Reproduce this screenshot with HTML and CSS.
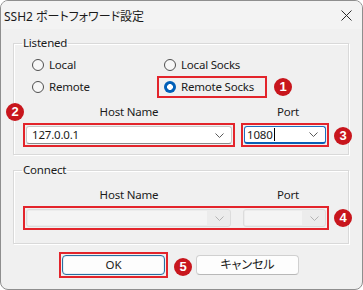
FILE: index.html
```html
<!DOCTYPE html>
<html lang="ja">
<head>
<meta charset="utf-8">
<title>SSH2 ポートフォワード設定</title>
<link rel="stylesheet" href="styles.css">
</head>
<body>
<div class="window">
  <div class="titlebar">
    <span class="title">SSH2 ポートフォワード設定</span>
    <svg class="close" width="11" height="11" viewBox="0 0 11 11"><path d="M0.5 0.5 L10.5 10.5 M10.5 0.5 L0.5 10.5" stroke="#2b2b2b" stroke-width="1" fill="none"/></svg>
  </div>

  <fieldset class="group listened">
    <legend>Listened</legend>
    <div class="radios">
      <label class="radio"><span class="dot"></span>Local</label>
      <label class="radio alt"><span class="dot"></span>Local Socks</label>
      <label class="radio"><span class="dot"></span>Remote</label>
      <label class="radio alt mark"><span class="dot on"></span>Remote Socks</label>
    </div>
    <div class="fields">
      <div class="lbl">Host Name</div>
      <div class="lbl port-lbl">Port</div>
      <div class="mark box">
        <div class="combo host"><span class="val">127.0.0.1</span><svg class="chev" width="9" height="5" viewBox="0 0 9 5"><polyline points="0.5,0.5 4.5,4.5 8.5,0.5" fill="none" stroke="#5a5a5a" stroke-width="1"/></svg></div>
      </div>
      <div class="mark box">
        <div class="combo port focus"><span class="val short">1080<span class="caret"></span></span><svg class="chev" width="9" height="5" viewBox="0 0 9 5"><polyline points="0.5,0.5 4.5,4.5 8.5,0.5" fill="none" stroke="#5a5a5a" stroke-width="1"/></svg></div>
      </div>
    </div>
  </fieldset>

  <fieldset class="group connect">
    <legend>Connect</legend>
    <div class="fields">
      <div class="lbl">Host Name</div>
      <div class="lbl port-lbl">Port</div>
      <div class="mark box pair">
        <div class="combo host disabled"><span class="edit"></span><svg class="chev" width="9" height="5" viewBox="0 0 9 5"><polyline points="0.5,0.5 4.5,4.5 8.5,0.5" fill="none" stroke="#b4b4b4" stroke-width="1"/></svg></div>
        <div class="combo port disabled"><span class="edit"></span><svg class="chev" width="9" height="5" viewBox="0 0 9 5"><polyline points="0.5,0.5 4.5,4.5 8.5,0.5" fill="none" stroke="#b4b4b4" stroke-width="1"/></svg></div>
      </div>
    </div>
  </fieldset>

  <div class="buttons">
    <div class="mark btnwrap"><button class="btn default">OK</button></div>
    <button class="btn cancel">キャンセル</button>
  </div>

  <span class="badge b1">1</span>
  <span class="badge b2">2</span>
  <span class="badge b3">3</span>
  <span class="badge b4">4</span>
  <span class="badge b5">5</span>
</div>
</body>
</html>
```

FILE: styles.css
```css
* { box-sizing: border-box; }
html, body {
  margin: 0;
  padding: 0;
  width: 363px;
  height: 290px;
  background: #ffffff;
  overflow: hidden;
}
body {
  font-family: "Noto Sans", "Noto Sans CJK JP", sans-serif;
  font-size: 11.5px;
  letter-spacing: -0.2px;
  color: #1b1b1b;
}
.window {
  position: relative;
  width: 363px;
  height: 290px;
  border: 1px solid #8e8e8e;
  border-radius: 8px;
  background: #f0f0f0;
  overflow: hidden;
}
.titlebar {
  height: 28px;
  display: flex;
  align-items: center;
  justify-content: space-between;
  padding: 1px 10px 0 3px;
  background: #f3f3f3;
}
.title {
  font-family: "Noto Sans", "Noto Sans CJK JP", sans-serif;
  font-feature-settings: "palt";
  font-size: 12px;
  letter-spacing: 0;
  color: #1a1a1a;
}
.close { display: block; }

.group {
  width: 336px;
  margin: 6px 0 0 12px;
  border: 1px solid #d9d9d9;
  box-shadow: inset 1px 1px 0 #ffffff, 1px 1px 0 #ffffff;
  padding: 3px 8px 7px 8px;
  min-width: 0;
}
.group legend {
  padding: 0 1px;
  line-height: 16px;
  height: 16px;
  color: #1b1b1b;
}
.connect {
  margin-top: 7px;
  padding: 9px 8px 13px 8px;
}

.radios {
  display: grid;
  grid-template-columns: 135px auto;
  grid-auto-rows: 22px;
  justify-items: start;
}
.radio {
  display: flex;
  align-items: center;
  height: 22px;
  padding-left: 10px;
  line-height: 16px;
}
.radio.alt {
  border: 2px solid transparent;
  padding: 0 11px 0 5px;
}
.dot {
  width: 12px;
  height: 12px;
  border-radius: 50%;
  border: 1px solid #4f4f4f;
  background: #f7f7f7;
  margin-right: 5px;
  flex: none;
}
.dot.on {
  border: none;
  background: radial-gradient(circle, #ffffff 0 2.6px, #005fb8 3.2px);
}
.mark { border: 2px solid #e3242b; }
.radio.alt.mark { border-color: #e3242b; }

.fields {
  display: grid;
  grid-template-columns: 212px 88px;
  column-gap: 6px;
  row-gap: 3px;
  margin: 6px 0 0 1px;
}
.connect .fields { margin-top: 0; }
.lbl {
  text-align: center;
  line-height: 16px;
  height: 16px;
}
.port-lbl { padding-left: 6px; }

.box {
  padding: 1px;
  height: 24px;
  display: flex;
}
.pair {
  grid-column: 1 / 3;
  gap: 12px;
}
.combo {
  height: 18px;
  display: flex;
  align-items: center;
  justify-content: space-between;
  background: #ffffff;
  border: 1px solid #c9c9c9;
  border-bottom-color: #8a8a8a;
  border-radius: 3px;
  padding: 0 7px 0 5px;
}
.combo.host { width: 206px; }
.combo.port { width: 82px; padding-left: 2px; }
.combo.focus {
  border: 1px solid #1f6fc0;
  border-bottom: 2px solid #0a5fb5;
}
.val { line-height: 16px; display: flex; align-items: center; }
.caret {
  display: inline-block;
  width: 1px;
  height: 13px;
  background: #000;
  margin-left: 1px;
}
.chev { display: block; flex: none; }
.combo.disabled {
  background: #ececec;
  border: 1px solid #dcdcdc;
  padding: 1px 6px 1px 1px;
}
.combo.disabled .edit {
  display: block;
  height: 100%;
  background: #f4f4f4;
  flex: 1;
  margin-right: 8px;
}
.combo.port.disabled { width: 83px; }

.buttons {
  display: flex;
  align-items: center;
  margin: 8px 0 0 58px;
}
.btnwrap { padding: 1px; }
.btn {
  width: 103px;
  height: 20px;
  padding: 0;
  font-family: "Noto Sans", "Noto Sans CJK JP", sans-serif;
  font-size: 11.5px;
  color: #1b1b1b;
  background: #fdfdfd;
  border: 1px solid #d0d0d0;
  border-bottom-color: #b8b8b8;
  border-radius: 4px;
  line-height: 16px;
  display: block;
}
.btn.default {
  border: 1px solid #2a6e9e;
  box-shadow: inset 0 0 0 1px #e6f0f8;
}
.cancel {
  margin-left: 28px;
  font-feature-settings: "palt";
  font-size: 12px;
}

.badge {
  position: absolute;
  width: 18px;
  height: 18px;
  border-radius: 50%;
  background: #c8161d;
  color: #ffffff;
  font-family: "Liberation Sans", Arial, sans-serif;
  font-weight: bold;
  font-size: 13px;
  letter-spacing: 0;
  line-height: 18px;
  text-align: center;
}
.b1 { left: 273px; top: 77px; }
.b2 { left: 5px; top: 102px; }
.b3 { left: 333px; top: 126px; }
.b4 { left: 333px; top: 208px; }
.b5 { left: 173px; top: 257px; }
```
